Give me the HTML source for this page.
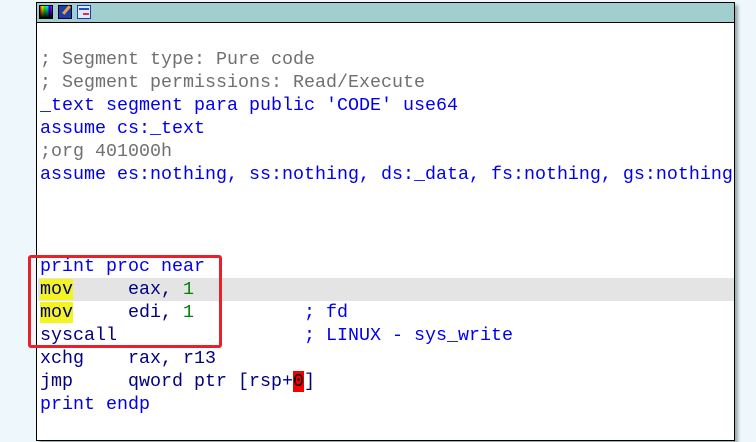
<!DOCTYPE html>
<html><head><meta charset="utf-8"><style>
html,body{margin:0;padding:0;}
body{width:756px;height:442px;background:#eef8fc;position:relative;overflow:hidden;}
.win{position:absolute;left:36px;top:2px;width:699px;height:439px;background:#fff;border:1px solid #000;box-sizing:border-box;box-shadow:3px 3px 3px #9aa;}
.tb{position:absolute;left:0;top:0;right:0;height:19px;background:#a1cfcf;border-bottom:1px solid #000;}
.ic{position:absolute;top:2px;width:14px;height:14px;box-sizing:border-box;}
.l{position:absolute;left:3px;font-family:"Liberation Mono",monospace;font-size:18.33px;line-height:23px;height:23px;white-space:pre;color:#0000ee;}
.c{color:#707070}
.k{color:#000080}
.n{color:#008000}
.y{background:#f4f420}
.r{background:#f00000;color:#000}
</style></head><body>
<div class="win">
 <div class="tb">
  <div class="ic" style="left:2px;background:linear-gradient(to bottom,transparent,#000),linear-gradient(to right,#f00,#ff0,#0f0,#0ff,#00f,#f0f);border:1px solid #000"></div>
  <div class="ic" style="left:21px;background:#1a3fa8;border:1px solid #002;"><div style="position:absolute;left:6px;top:-1px;width:3px;height:10px;background:#f0a040;transform:rotate(40deg)"></div></div>
  <div class="ic" style="left:40px;background:#dfe8ff;border:1px solid #1a3fa8;"><div style="position:absolute;left:5px;top:7px;width:6px;height:2px;background:#e03030"></div><div style="position:absolute;left:1px;top:2px;width:10px;height:2px;background:#2050c0"></div></div>
 </div>
 <div style="position:absolute;left:1px;right:0;top:275px;height:23px;background:#e4e4e4"></div>
 <div class="l" style="top:45px"><span class="c">; Segment type: Pure code</span></div>
 <div class="l" style="top:68px"><span class="c">; Segment permissions: Read/Execute</span></div>
 <div class="l" style="top:91px">_text segment para public 'CODE' use64</div>
 <div class="l" style="top:114px">assume cs:_text</div>
 <div class="l" style="top:137px"><span class="c">;org 401000h</span></div>
 <div class="l" style="top:160px">assume es:nothing, ss:nothing, ds:_data, fs:nothing, gs:nothing</div>
 <div class="l" style="top:252px">print proc near</div>
 <div class="l k" style="top:275px"><span class="y">mov</span>     eax, <span class="n">1</span></div>
 <div class="l k" style="top:298px"><span class="y">mov</span>     edi, <span class="n">1</span>          <span style="color:#0000ee">; fd</span></div>
 <div class="l k" style="top:321px">syscall                 <span style="color:#0000ee">; LINUX - sys_write</span></div>
 <div class="l k" style="top:344px">xchg    rax, r13</div>
 <div class="l k" style="top:367px">jmp     qword ptr [rsp+<span class="r">0</span>]</div>
 <div class="l" style="top:390px">print endp</div>
</div>
<div style="position:absolute;left:28px;top:255px;width:194px;height:93px;border:3px solid #e8202a;border-radius:3px;box-sizing:border-box"></div>
</body></html>
